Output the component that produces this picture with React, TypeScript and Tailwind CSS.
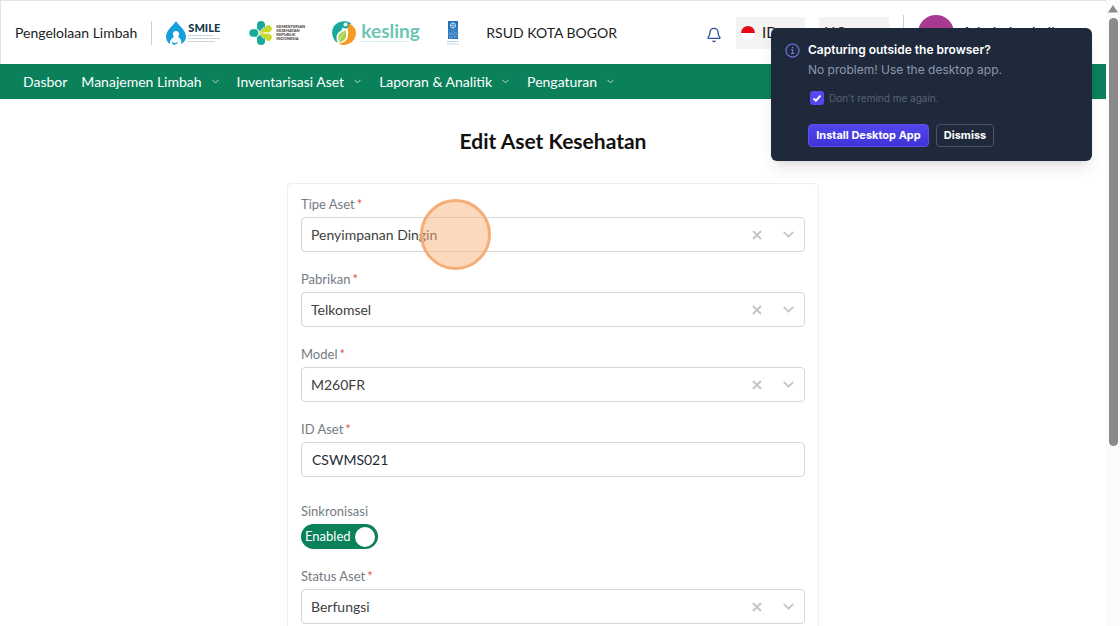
import React, { useState } from 'react';
import { Bell, ChevronDown } from 'lucide-react';

interface FieldProps {
  id: string;
  label: string;
  value: string;
}

const navItems = [
  { label: 'Dasbor', hasMenu: false },
  { label: 'Manajemen Limbah', hasMenu: true },
  { label: 'Inventarisasi Aset', hasMenu: true },
  { label: 'Laporan & Analitik', hasMenu: true },
  { label: 'Pengaturan', hasMenu: true },
];

function SmileLogo() {
  return (
    <div className="flex w-[56px] items-center gap-[2px]">
      <svg viewBox="0 0 20 24" className="h-6 w-5 shrink-0" aria-hidden="true">
        <path d="M10 0C8 4 0 9 0 15.500 0 19 1.500 21.500 4 23c-.3-3 .7-4.500 2.500-6 .8-.7 1.300-1 1.300-1.600-.7-.8-1-1.700-.9-2.600.2-1.700 1.400-2.700 3.100-2.700s2.900 1 3.100 2.700c.1.900-.2 1.800-.9 2.600 0 .6.500.9 1.300 1.600 1.800 1.500 2.300 3.500 1.500 6C18 21.500 20 19 20 15.500 20 9 12 4 10 0z" fill="#169fda" />
        <path d="M5.500 20.500c1.500 1.500 4 2 6.500.5-.5 2-2.500 3-5 2.700z" fill="#169fda" />
      </svg>
      <div className="flex flex-col gap-px">
        <span className="text-[11px] leading-[11px] font-black text-[#16364f]">SMILE</span>
        <svg viewBox="0 0 32 9" className="h-[9px] w-8" aria-hidden="true">
          <path d="M0 1.500h26M0 4.500h32M0 7.500h27" stroke="#c3ccd2" strokeWidth="1" strokeDasharray="3 .6" />
        </svg>
      </div>
    </div>
  );
}

function KemenkesLogo() {
  return (
    <div className="flex w-[56px] items-center gap-[3px]">
      <svg viewBox="0 0 24 24" className="h-6 w-6 shrink-0" aria-hidden="true">
        <path d="M8 4a4 4 0 0 1 8 0v3l-4.500 4L8 7.500z" fill="#18a99c" />
        <path d="M8 20a4 4 0 0 0 8 0v-3l-4.500-4L8 16.500z" fill="#18a99c" />
        <path d="M4 8.300h3.500L10.500 12l-3 3.700H4a3.700 3.700 0 0 1 0-7.400z" fill="#18a99c" />
        <path d="M13 11.500 17.200 4.800a3.600 3.600 0 0 1 5 5L20 11.500z" fill="#c9d92b" />
        <path d="M13 12.500l4.200 6.700a3.600 3.600 0 0 0 5-5L20 12.500z" fill="#c9d92b" />
        <path d="M9.500 12 15 6.500v11z" fill="#c9d92b" />
        <path d="M9.500 12h13M15.500 6 9 12l6.500 6" stroke="#fff" strokeWidth=".7" fill="none" />
      </svg>
      <div className="flex flex-col text-[4px] leading-[4px] font-black text-[#4b4444]">
        <span>KEMENTERIAN</span>
        <span>KESEHATAN</span>
        <span>REPUBLIK</span>
        <span>INDONESIA</span>
      </div>
    </div>
  );
}

function KeslingLogo() {
  return (
    <div className="flex w-[88px] items-center gap-[5px]">
      <svg viewBox="0 0 24 24" className="h-6 w-6 shrink-0" aria-hidden="true">
        <path d="M15 .500C8 -1 1 3 .2 10-.3 15 2 20 5.500 22c-2-6-1-10 3-12 2-1 2-3 1-4 1 .5 2 1.500 4 1.500 2.500 0 4-1.500 5.500-5.500z" fill="#18a99c" />
        <path d="M17 2.500c4 1.500 7 5 7 9.500 0 7-6 12-12.500 12-2 0-4-.6-5-1.500 7-.5 9-4 9.500-8 .4-4-1-5 1-12z" fill="#f59b23" />
        <path d="M14 9c-5 2-8 4-8 8.500 0 2 .5 3.500 1 4.500 4-1 7-3.500 7.500-7 .3-2.500-.5-4 -.5-6z" fill="#a8cf45" stroke="#fff" strokeWidth=".7" />
        <path d="M7 21c1-4 3-7 5.500-9" stroke="#fff" strokeWidth=".7" fill="none" />
        <circle cx="13.500" cy="3.500" r="2" fill="#fff" />
      </svg>
      <div className="flex flex-col">
        <span className="relative font-['Lato',sans-serif] text-[19px] leading-[18px] font-bold text-[#6cc5b4]">kesling</span>
        <svg viewBox="0 0 48 3" className="h-[3px] w-12" aria-hidden="true">
          <path d="M0 1.500h47" stroke="#cfe9e4" strokeDasharray="3 .6" />
        </svg>
      </div>
    </div>
  );
}

function UndpLogo() {
  return (
    <svg viewBox="0 0 12 24" className="h-6 w-3" aria-hidden="true">
      <path d="M1 0h10v18H1z" fill="#2172b8" />
      <circle cx="6" cy="4.500" r="2.600" fill="none" stroke="#d5e6f4" strokeWidth="1" />
      <path d="M3.500 4.500h5M6 2v5" stroke="#d5e6f4" strokeWidth=".6" />
      <path d="M1 9h10M6 9v9M1 13.500h10" stroke="#79abd6" strokeWidth=".6" />
      <path d="M2.500 10.500v2h2v-2M7.500 12.500v-2l2 2v-2M2.500 15h2v2h-2zM7.500 17v-2h2v1h-2" stroke="#8fb9dd" strokeWidth=".6" fill="none" />
      <path d="M0 20.500h12M0 23h12" stroke="#b7cfe6" strokeWidth="1.200" strokeDasharray="2 .4" />
    </svg>
  );
}

function Header() {
  return (
    <header className="flex h-16 items-center border-t border-l border-[#e3e3e3] pl-[14px] text-[14px] text-[#1c1c1c]">
      <span className="whitespace-nowrap">Pengelolaan Limbah</span>
      <span className="mx-[14px] h-6 w-px bg-[#cfcfcf]" />
      <div className="flex shrink-0 items-center gap-[27px]">
        <SmileLogo />
        <KemenkesLogo />
        <KeslingLogo />
        <UndpLogo />
        <span className="whitespace-nowrap">RSUD KOTA BOGOR</span>
      </div>
      <div className="ml-auto flex shrink-0 items-center">
        <button type="button" aria-label="Notifikasi" className="mr-[14px] pt-1 text-[#2b4a9b]">
          <Bell size={16} strokeWidth={2} />
        </button>
        <button type="button" className="mr-[14px] flex h-8 w-[69px] items-center gap-[7px] bg-[#f4f3f2] pl-[5px] text-[15px]">
          <svg viewBox="0 0 14 14" className="h-[14px] w-[14px]" aria-hidden="true">
            <circle cx="7" cy="7" r="7" fill="#fff" />
            <path d="M0 7a7 7 0 0 1 14 0z" fill="#e30a17" />
          </svg>
          ID
        </button>
        <button type="button" className="mr-[14px] h-8 w-[70px] bg-[#f4f3f2] pl-[5px] text-left text-[15px]">
          HC
        </button>
        <span className="mr-[14px] h-9 w-px bg-[#cfcfcf]" />
        <span className="mr-2 size-9 rounded-full bg-[#a83a91]" />
        <span className="w-[144px] text-[15px]">Admin Logistik</span>
      </div>
    </header>
  );
}

function NavBar() {
  return (
    <nav className="flex h-[35px] items-center bg-[#0a815b] pl-[23px] text-[14px] text-white">
      {navItems.map((item) => (
        <button key={item.label} type="button" className="mr-[14px] flex items-center whitespace-nowrap">
          {item.label}
          {item.hasMenu && <ChevronDown size={11} className="mr-[2px] ml-2 opacity-80" />}
        </button>
      ))}
    </nav>
  );
}

function FieldLabel({ id, label, required = true }: { id: string; label: string; required?: boolean }) {
  return (
    <label htmlFor={id} className="mb-1 block text-[13px] leading-[18px] text-[#757b83]">
      {label}
      {required && <span className="ml-[2px] text-[#e05252]">*</span>}
    </label>
  );
}

function SelectField({ id, label, value }: FieldProps) {
  return (
    <div>
      <FieldLabel id={id} label={label} />
      <div className="flex h-[35px] items-center rounded-[4px] border border-[#d6d6d6] bg-white text-[#c5c5c5]">
        <select id={id} defaultValue={value} className="h-full min-w-0 flex-1 appearance-none pl-[9px] text-[14px] text-[#404040] outline-none">
          <option>{value}</option>
        </select>
        <button type="button" aria-label={`Hapus ${label}`} className="mr-4">
          <svg viewBox="0 0 14 14" className="size-[14px]" aria-hidden="true">
            <path d="m3 3 8 8m0-8-8 8" stroke="currentColor" strokeWidth="2" />
          </svg>
        </button>
        <ChevronDown size={17} strokeWidth={2.5} className="mr-[7px]" />
      </div>
    </div>
  );
}

function AssetForm() {
  const [sync, setSync] = useState(true);

  return (
    <form className="mx-auto flex w-full max-w-[532px] flex-col gap-[18px] rounded-[4px] border border-[#eeeeee] px-[13px] pt-[11px] pb-6">
      <div className="relative">
        <SelectField id="tipe" label="Tipe Aset" value="Penyimpanan Dingin" />
        {/* penanda klik */}
        <span className="pointer-events-none absolute top-1 left-[119px] size-[71px] rounded-full border-[3px] border-[#f5ad78] bg-[#f9b27b]/50" />
      </div>
      <SelectField id="pabrikan" label="Pabrikan" value="Telkomsel" />
      <SelectField id="model" label="Model" value="M260FR" />
      <div className="mb-[7px]">
        <FieldLabel id="id-aset" label="ID Aset" />
        <input
          id="id-aset"
          defaultValue="CSWMS021"
          className="h-[35px] w-full rounded-[4px] border border-[#d6d6d6] px-[10px] text-[14px] text-[#1f2937] outline-none"
        />
      </div>
      <div>
        <FieldLabel id="sync" label="Sinkronisasi" required={false} />
        <button
          id="sync"
          type="button"
          role="switch"
          aria-checked={sync}
          onClick={() => setSync(!sync)}
          className={`flex h-[25px] w-[77px] items-center justify-between rounded-full pr-[3px] pl-1 text-[13px] text-white ${
            sync ? 'bg-[#0a815b]' : 'flex-row-reverse bg-gray-400'
          }`}
        >
          {sync ? 'Enabled' : 'Disabled'}
          <span className="size-5 rounded-full bg-white" />
        </button>
      </div>
      <SelectField id="status" label="Status Aset" value="Berfungsi" />
    </form>
  );
}

function CaptureNotice() {
  const [open, setOpen] = useState(true);
  if (!open) return null;

  return (
    <aside className="absolute top-7 right-7 flex h-[133px] w-[321px] gap-2 rounded-[6px] bg-[#1e293b] py-[14px] pr-4 pl-[14px] font-['Inter','Noto_Sans',sans-serif] shadow-lg">
      <svg viewBox="0 0 16 16" className="mt-px size-[15px] shrink-0" fill="none" stroke="#7477e8" aria-hidden="true">
        <circle cx="8" cy="8" r="7" strokeWidth="1.200" />
        <path d="M6.500 7.300h1.700v3.800M6.300 11.200h3.600" strokeWidth="1.200" />
        <path d="M7.300 4.800h1.500" strokeWidth="1.500" />
      </svg>
      <div className="flex flex-col">
        <h2 className="text-[12px] leading-4 font-semibold whitespace-nowrap text-white">Capturing outside the browser?</h2>
        <p className="mt-1 text-[12px] leading-4 whitespace-nowrap text-[#8c98ab]">No problem! Use the desktop app.</p>
        <label className="mt-3 ml-[2px] flex items-center gap-[5px] text-[10px] leading-4 text-[#566377]">
          <span className="grid size-[14px] place-items-center">
            <input type="checkbox" defaultChecked className="peer col-start-1 row-start-1 size-[14px] appearance-none rounded-[3px] bg-[#5548ee]" />
            <svg viewBox="0 0 14 14" className="pointer-events-none col-start-1 row-start-1 size-[14px] opacity-0 peer-checked:opacity-100" aria-hidden="true">
              <path d="m3.500 7.300 2.400 2.300 4.600-5" stroke="#fff" strokeWidth="1.800" fill="none" />
            </svg>
          </span>
          Don't remind me again.
        </label>
        <div className="mt-[18px] flex gap-[7px] text-[11px] font-bold text-white">
          <button type="button" className="h-[23px] w-[121px] rounded-[4px] border border-[#5b50ee] bg-linear-to-b from-[#5046ec] to-[#4033d8] whitespace-nowrap">
            Install Desktop App
          </button>
          <button type="button" onClick={() => setOpen(false)} className="h-[23px] w-[58px] rounded-[4px] border border-[#475569]">
            Dismiss
          </button>
        </div>
      </div>
    </aside>
  );
}

function ScrollTrack() {
  return (
    <div className="flex w-[14px] shrink-0 flex-col items-center bg-[#fbfbfb] pt-[5px]" aria-hidden="true">
      <svg viewBox="0 0 10 8" className="h-2 w-[10px]">
        <path d="M5 0 10 7.500H0z" fill="#8a8a8a" />
      </svg>
      <span className="mt-[5px] h-[69%] w-[9px] rounded-full bg-[#8a8a8a]" />
    </div>
  );
}

export default function App() {
  return (
    <div className="relative flex h-screen overflow-hidden bg-white font-['Lato',sans-serif]">
      <div className="min-w-0 flex-1 overflow-hidden">
        <Header />
        <NavBar />
        <main>
          <h1 className="pt-[28px] pb-[28px] text-center text-[21px] leading-7 font-bold text-[#111]">Edit Aset Kesehatan</h1>
          <AssetForm />
        </main>
      </div>
      <ScrollTrack />
      <CaptureNotice />
    </div>
  );
}
